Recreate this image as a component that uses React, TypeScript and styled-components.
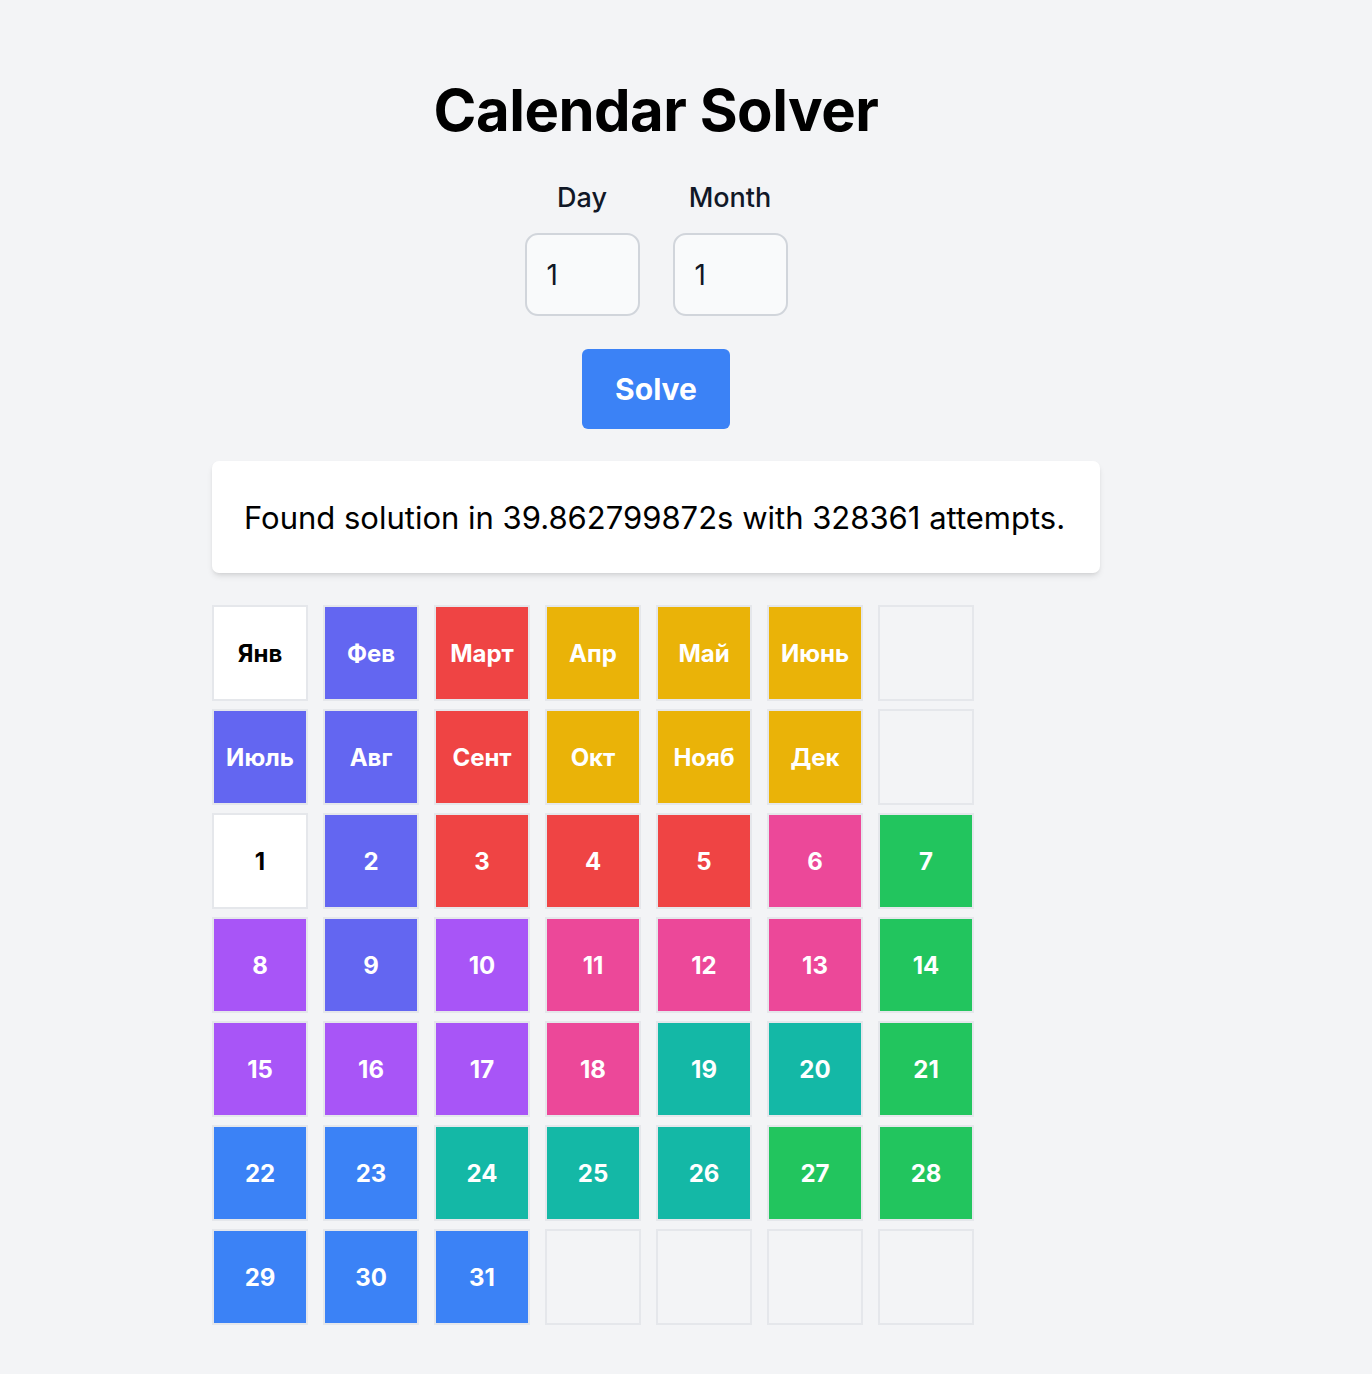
import React from "react";
import styled, { createGlobalStyle } from "styled-components";

const Global = createGlobalStyle`
  html, body { margin: 0; padding: 0; background: #f3f4f6; }
  body { font-family: Inter, "Noto Sans", sans-serif; }
  * { box-sizing: border-box; }
`;

const Page = styled.div`
  display: flex;
  justify-content: center;
  padding: 76px 60px 40px 0;
  min-height: 1374px;
`;

const Column = styled.div`
  width: 888px;
  display: flex;
  flex-direction: column;
  align-items: center;
`;

const Title = styled.h1`
  margin: 0;
  font-size: 58px;
  font-weight: 700;
  color: #000;
  line-height: 68px;
  letter-spacing: -0.5px;
`;

const Fields = styled.div`
  margin-top: 38px;
  display: flex;
  gap: 33px;
`;

const Field = styled.label`
  display: flex;
  flex-direction: column;
  align-items: center;
  gap: 19px;
`;

const FieldLabel = styled.span`
  font-size: 27px;
  line-height: 32px;
  font-weight: 500;
  color: #111827;
`;

const Input = styled.input`
  width: 115px;
  height: 83px;
  border: 2px solid #d1d5db;
  border-radius: 13px;
  background: #f9fafb;
  font-family: Inter, sans-serif;
  font-size: 28px;
  color: #111827;
  padding: 0 0 0 20px;
  outline: none;
`;

const SolveButton = styled.button`
  margin-top: 33px;
  width: 148px;
  height: 80px;
  border: none;
  border-radius: 6px;
  background: #3b82f6;
  color: #fff;
  font-family: Inter, sans-serif;
  font-size: 30px;
  font-weight: 700;
  cursor: pointer;
`;

const ResultCard = styled.div`
  margin-top: 32px;
  align-self: stretch;
  height: 112px;
  background: #fff;
  border-radius: 7px;
  box-shadow: 0 4px 6px -1px rgba(0, 0, 0, 0.1), 0 2px 4px -2px rgba(0, 0, 0, 0.1);
  display: flex;
  align-items: center;
  padding: 0 32px;
  font-size: 31px;
  color: #000;
  letter-spacing: 0;
`;

const Board = styled.div`
  margin-top: 32px;
  align-self: flex-start;
  display: grid;
  grid-template-columns: repeat(7, 96px);
  grid-auto-rows: 96px;
  column-gap: 15px;
  row-gap: 8px;
`;

const Cell = styled.div<{ $bg?: string; $dark?: boolean }>`
  border: 2px solid #e5e7eb;
  background: ${(p) => p.$bg || "transparent"};
  color: ${(p) => (p.$dark ? "#000" : "#fff")};
  display: flex;
  align-items: center;
  justify-content: center;
  font-size: 24px;
  font-weight: 700;
  padding-top: 1px;
`;

const C = {
  w: "#ffffff",
  i: "#6366f1",
  r: "#ef4444",
  y: "#eab308",
  p: "#ec4899",
  g: "#22c55e",
  v: "#a855f7",
  t: "#14b8a6",
  b: "#3b82f6",
  e: "",
};

type Item = [string, keyof typeof C];

const rows: Item[][] = [
  [["Янв", "w"], ["Фев", "i"], ["Март", "r"], ["Апр", "y"], ["Май", "y"], ["Июнь", "y"], ["", "e"]],
  [["Июль", "i"], ["Авг", "i"], ["Сент", "r"], ["Окт", "y"], ["Нояб", "y"], ["Дек", "y"], ["", "e"]],
  [["1", "w"], ["2", "i"], ["3", "r"], ["4", "r"], ["5", "r"], ["6", "p"], ["7", "g"]],
  [["8", "v"], ["9", "i"], ["10", "v"], ["11", "p"], ["12", "p"], ["13", "p"], ["14", "g"]],
  [["15", "v"], ["16", "v"], ["17", "v"], ["18", "p"], ["19", "t"], ["20", "t"], ["21", "g"]],
  [["22", "b"], ["23", "b"], ["24", "t"], ["25", "t"], ["26", "t"], ["27", "g"], ["28", "g"]],
  [["29", "b"], ["30", "b"], ["31", "b"], ["", "e"], ["", "e"], ["", "e"], ["", "e"]],
];

export default function App() {
  return (
    <>
      <Global />
      <Page>
        <Column>
          <Title>Calendar Solver</Title>
          <Fields>
            <Field>
              <FieldLabel>Day</FieldLabel>
              <Input type="text" defaultValue="1" />
            </Field>
            <Field>
              <FieldLabel>Month</FieldLabel>
              <Input type="text" defaultValue="1" />
            </Field>
          </Fields>
          <SolveButton>Solve</SolveButton>
          <ResultCard>Found solution in 39.862799872s with 328361 attempts.</ResultCard>
          <Board>
            {rows.flat().map(([label, c], idx) => (
              <Cell key={idx} $bg={C[c]} $dark={c === "w"}>
                {label}
              </Cell>
            ))}
          </Board>
        </Column>
      </Page>
    </>
  );
}
